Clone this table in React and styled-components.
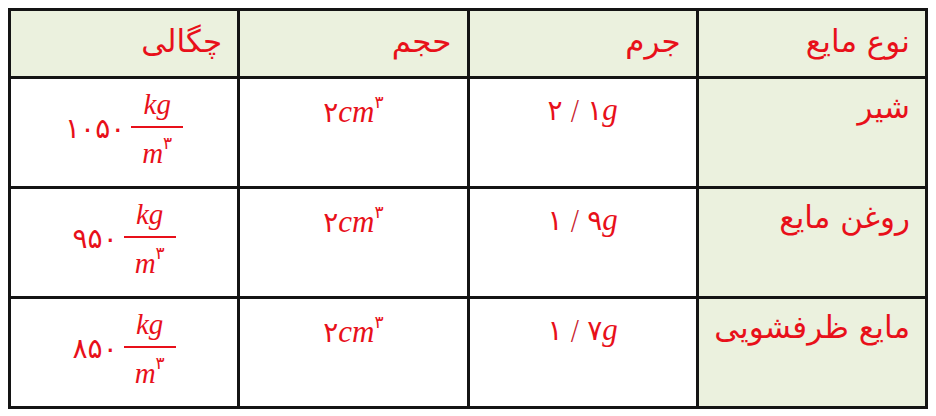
import React from "react";
import styled, { createGlobalStyle } from "styled-components";

const GlobalStyle = createGlobalStyle`
  body {
    margin: 8px;
    background: #ffffff;
    font-family: "DejaVu Sans", "Noto Sans", sans-serif;
  }
`;

const Table = styled.div`
  direction: rtl;
  width: 920px;
  display: grid;
  grid-template-columns: repeat(4, 1fr);
  grid-template-rows: 65px repeat(3, 107px);
  gap: 3px;
  padding: 3px;
  box-sizing: border-box;
  background: #141414;
`;

const Cell = styled.div`
  background: ${({ shaded }) => (shaded ? "#ebf1de" : "#ffffff")};
  color: #e8101a;
  display: flex;
  flex-direction: column;
  align-items: ${({ center }) => (center ? "center" : "flex-start")};
  justify-content: ${({ middle }) => (middle ? "center" : "flex-start")};
  padding: ${({ pad }) => pad || "10px 15px 0 15px"};
  font-size: 31px;
  line-height: 1.2;
`;

const Ltr = styled.div`
  direction: ltr;
  display: flex;
  align-items: ${({ align }) => align || "baseline"};
  font-size: 26px;
`;

const Digits = styled.span`
  font-family: "DejaVu Sans", sans-serif;
  font-size: ${({ size }) => size || "28px"};
`;

const MathVar = styled.span`
  font-family: "Liberation Serif", "DejaVu Serif", serif;
  font-style: italic;
  font-size: ${({ size }) => size || "31px"};
`;

const Sup = styled.sup`
  font-family: "DejaVu Sans", sans-serif;
  font-style: normal;
  font-size: 17px;
  vertical-align: 14px;
  line-height: 0;
`;

const Slash = styled.span`
  font-family: "DejaVu Sans", sans-serif;
  font-weight: 300;
  margin: 0 8px;
  color: #c8202a;
`;

const Fraction = styled.span`
  display: inline-flex;
  flex-direction: column;
  align-items: center;
  margin-left: 6px;
`;

const Bar = styled.span`
  width: 52px;
  height: 2px;
  background: #e8101a;
  margin: 4px 0 8px;
`;

const headers = ["نوع مایع", "جرم", "حجم", "چگالی"];

const rows = [
  { name: "شیر", mass: ["۲", "۱"], density: "۱۰۵۰" },
  { name: "روغن مایع", mass: ["۱", "۹"], density: "۹۵۰" },
  { name: "مایع ظرفشویی", mass: ["۱", "۷"], density: "۸۵۰" },
];

function Density({ value }) {
  return (
    <Ltr align="center">
      <Digits>{value}</Digits>
      <Fraction>
        <MathVar size="29px">kg</MathVar>
        <Bar />
        <MathVar size="29px">
          m<Sup>۳</Sup>
        </MathVar>
      </Fraction>
    </Ltr>
  );
}

export default function App() {
  return (
    <>
      <GlobalStyle />
      <Table>
        {headers.map((h) => (
          <Cell key={h} shaded middle pad="0 15px 4px 15px">
            {h}
          </Cell>
        ))}
        {rows.map((r) => (
          <React.Fragment key={r.name}>
            <Cell shaded>{r.name}</Cell>
            <Cell center pad="12px 14px 0 14px">
              <Ltr>
                <Digits>{r.mass[0]}</Digits>
                <Slash>/</Slash>
                <Digits>{r.mass[1]}</Digits>
                <MathVar>g</MathVar>
              </Ltr>
            </Cell>
            <Cell center pad="14px 14px 0 14px">
              <Ltr>
                <Digits>۲</Digits>
                <MathVar>
                  cm<Sup>۳</Sup>
                </MathVar>
              </Ltr>
            </Cell>
            <Cell center pad="8px 14px 0 14px">
              <Density value={r.density} />
            </Cell>
          </React.Fragment>
        ))}
      </Table>
    </>
  );
}
